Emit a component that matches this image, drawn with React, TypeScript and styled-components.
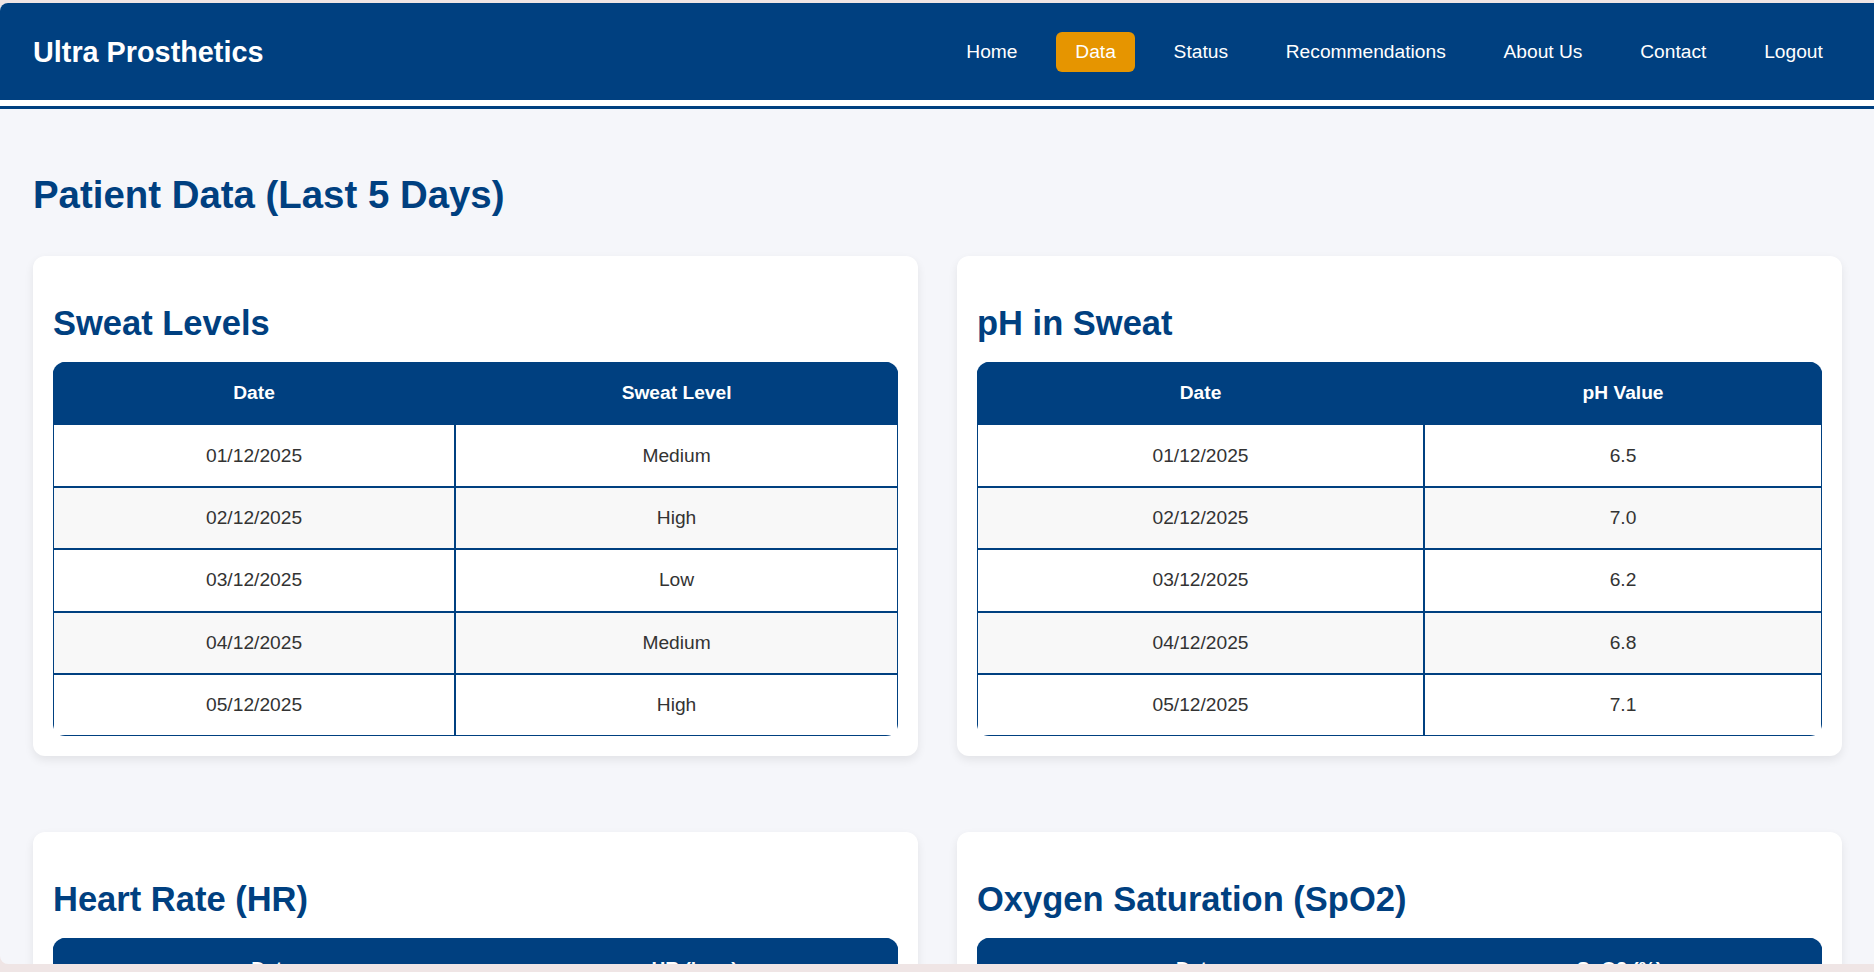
import React from 'react';
import styled, { createGlobalStyle } from 'styled-components';

const NAVY = '#004080';

const Global = createGlobalStyle`
  html, body { margin: 0; padding: 0; overflow: hidden; background: #efe5e5; }
  body { font-family: "Liberation Sans", Arial, Helvetica, sans-serif; }
  * { box-sizing: border-box; }
`;

const Frame = styled.div`
  height: 972px;
  padding: 3px 0 8px 0;
  background: #efe5e5;
`;

const Window = styled.div`
  height: 961px;
  border-radius: 8px 0 0 8px;
  overflow: hidden;
  background: #f5f6fa;
`;

const HeaderWrap = styled.header`
  background: #ffffff;
  padding-bottom: 6px;
  border-bottom: 3px solid ${NAVY};
`;

const NavBar = styled.div`
  height: 97px;
  background: ${NAVY};
  display: flex;
  align-items: center;
  justify-content: space-between;
  padding: 1px 32px 0 33px;
`;

const Brand = styled.div`
  color: #ffffff;
  font-weight: 700;
  font-size: 28.8px;
`;

const NavList = styled.nav`
  display: flex;
  align-items: center;
  gap: 19.4px;
`;

const NavLink = styled.a<{ $active?: boolean }>`
  color: #ffffff;
  font-size: 19.2px;
  line-height: 22px;
  padding: 9px 19.2px;
  border-radius: 6px;
  text-decoration: none;
  background: ${(p) => (p.$active ? '#e69500' : 'transparent')};
`;

const Main = styled.main`
  padding: 0 32px 0 33px;
`;

const PageTitle = styled.h1`
  margin: 64px 0 39px;
  font-size: 38.4px;
  font-weight: 700;
  color: ${NAVY};
`;

const Grid = styled.div`
  display: grid;
  grid-template-columns: 1fr 1fr;
  column-gap: 39px;
  row-gap: 76px;
`;

const Card = styled.section`
  background: #ffffff;
  border-radius: 12px;
  padding: 20px;
  box-shadow: 0 4px 10px rgba(0, 0, 0, 0.08);
`;

const CardTitle = styled.h2`
  margin: 28px 0 19px;
  font-size: 34.5px;
  font-weight: 700;
  color: ${NAVY};
`;

const TableWrap = styled.div`
  border-radius: 12px;
  overflow: hidden;
`;

const Table = styled.table`
  width: 100%;
  border-collapse: separate;
  border-spacing: 0;
`;

const Th = styled.th`
  background: ${NAVY};
  color: #ffffff;
  font-weight: 700;
  font-size: 19.2px;
  padding: 19.2px;
  border: 1px solid ${NAVY};
  text-align: center;
`;

const Row = styled.tr`
  &:nth-child(even) td {
    background: #f8f8f8;
  }
`;

const Td = styled.td`
  background: #ffffff;
  color: #333333;
  font-size: 19.2px;
  padding: 19.2px;
  border: 1px solid ${NAVY};
  text-align: center;
`;

type Dataset = { title: string; col: string; values: string[] };

const dates = ['01/12/2025', '02/12/2025', '03/12/2025', '04/12/2025', '05/12/2025'];

const datasets: Dataset[] = [
  { title: 'Sweat Levels', col: 'Sweat Level', values: ['Medium', 'High', 'Low', 'Medium', 'High'] },
  { title: 'pH in Sweat', col: 'pH Value', values: ['6.5', '7.0', '6.2', '6.8', '7.1'] },
  { title: 'Heart Rate (HR)', col: 'HR (bpm)', values: ['72', '78', '70', '75', '80'] },
  { title: 'Oxygen Saturation (SpO2)', col: 'SpO2 (%)', values: ['98', '97', '99', '98', '96'] },
];

const navItems = ['Home', 'Data', 'Status', 'Recommendations', 'About Us', 'Contact', 'Logout'];

export default function App() {
  return (
    <>
      <Global />
      <Frame>
        <Window>
          <HeaderWrap>
            <NavBar>
              <Brand>Ultra Prosthetics</Brand>
              <NavList>
                {navItems.map((n) => (
                  <NavLink key={n} href="#" $active={n === 'Data'}>
                    {n}
                  </NavLink>
                ))}
              </NavList>
            </NavBar>
          </HeaderWrap>
          <Main>
            <PageTitle>Patient Data (Last 5 Days)</PageTitle>
            <Grid>
              {datasets.map((d) => (
                <Card key={d.title}>
                  <CardTitle>{d.title}</CardTitle>
                  <TableWrap>
                    <Table>
                      <thead>
                        <tr>
                          <Th>Date</Th>
                          <Th>{d.col}</Th>
                        </tr>
                      </thead>
                      <tbody>
                        {dates.map((dt, i) => (
                          <Row key={dt}>
                            <Td>{dt}</Td>
                            <Td>{d.values[i]}</Td>
                          </Row>
                        ))}
                      </tbody>
                    </Table>
                  </TableWrap>
                </Card>
              ))}
            </Grid>
          </Main>
        </Window>
      </Frame>
    </>
  );
}
